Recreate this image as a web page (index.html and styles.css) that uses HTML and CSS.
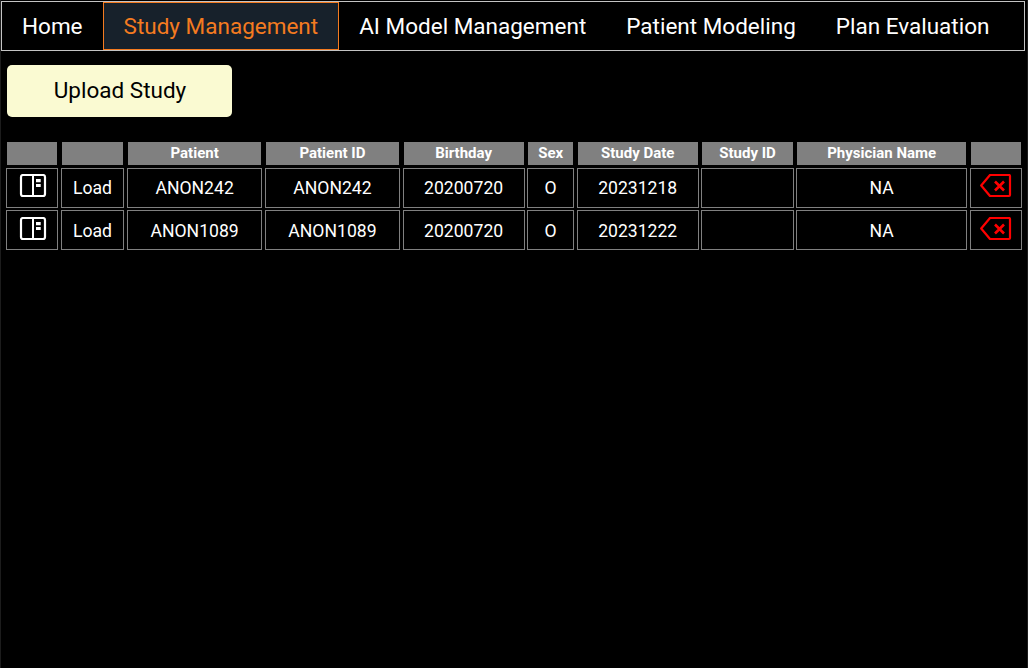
FILE: index.html
```html
<!DOCTYPE html>
<html lang="en">
<head>
<meta charset="utf-8">
<title>Study Management</title>
<link rel="stylesheet" href="styles.css">
</head>
<body>
<nav class="nav">
  <a class="tab">Home</a>
  <a class="tab active">Study Management</a>
  <a class="tab">AI Model Management</a>
  <a class="tab">Patient Modeling</a>
  <a class="tab">Plan Evaluation</a>
</nav>
<button class="upload">Upload Study</button>
<div class="studies">
  <div class="hd"></div><div class="hd"></div><div class="hd">Patient</div><div class="hd">Patient ID</div><div class="hd">Birthday</div><div class="hd">Sex</div><div class="hd">Study Date</div><div class="hd">Study ID</div><div class="hd">Physician Name</div><div class="hd"></div>

  <div class="cell"><svg class="ico" width="30" height="24" viewBox="0 0 30 24"><rect x="4" y="1" width="24" height="21" rx="2" fill="none" stroke="#fff" stroke-width="2.2"/><path d="M16 1v21" stroke="#fff" stroke-width="2"/><path d="M19 5h4.7v3.3h-4.7zM19 10h4.7v3h-4.7z" fill="#fff"/></svg></div>
  <div class="cell">Load</div><div class="cell">ANON242</div><div class="cell">ANON242</div><div class="cell">20200720</div><div class="cell">O</div><div class="cell">20231218</div><div class="cell"></div><div class="cell">NA</div>
  <div class="cell"><svg class="ico" width="36" height="24" viewBox="0 0 36 24"><path d="M12 1H31a1 1 0 0 1 1 1V21a1 1 0 0 1-1 1H12L3.2 11.5Z" fill="none" stroke="#f00" stroke-width="2.2" stroke-linejoin="round"/><path d="M17 7.5l9 9M26 7.5l-9 9" stroke="#f00" stroke-width="2.6"/></svg></div>

  <div class="cell"><svg class="ico" width="30" height="24" viewBox="0 0 30 24"><rect x="4" y="1" width="24" height="21" rx="2" fill="none" stroke="#fff" stroke-width="2.2"/><path d="M16 1v21" stroke="#fff" stroke-width="2"/><path d="M19 5h4.7v3.3h-4.7zM19 10h4.7v3h-4.7z" fill="#fff"/></svg></div>
  <div class="cell">Load</div><div class="cell">ANON1089</div><div class="cell">ANON1089</div><div class="cell">20200720</div><div class="cell">O</div><div class="cell">20231222</div><div class="cell"></div><div class="cell">NA</div>
  <div class="cell"><svg class="ico" width="36" height="24" viewBox="0 0 36 24"><path d="M12 1H31a1 1 0 0 1 1 1V21a1 1 0 0 1-1 1H12L3.2 11.5Z" fill="none" stroke="#f00" stroke-width="2.2" stroke-linejoin="round"/><path d="M17 7.5l9 9M26 7.5l-9 9" stroke="#f00" stroke-width="2.6"/></svg></div>
</div>
</body>
</html>
```
FILE: styles.css
```css
html, body { margin: 0; padding: 0; background: #000; }
body { height: 668px; overflow: hidden; font-family: Roboto, sans-serif; color: #fff; padding-top: 1px; box-sizing: border-box; border-left: 1px solid #1c1c1c; border-right: 1px solid #1c1c1c; }
.nav { display: flex; height: 50px; box-sizing: border-box; border: 1px solid #c4c4c4; width: 1024px; }
.tab { display: flex; align-items: center; padding: 0 20px; font-size: 22.5px; color: #fff; box-sizing: border-box; white-space: nowrap; }
.tab.active { color: #f47b20; background: #17212b; border: 1px solid #f47b20; }
.upload { display: block; margin: 14px 0 0 6px; width: 225px; height: 52px; background: #fafad2; color: #000; border: 0; border-radius: 5px; font: 400 22.5px Roboto, sans-serif; padding: 0 0 2px 1px; }
.studies { display: grid; margin: 24px 0 0 5px; column-gap: 2.7px; row-gap: 2.4px; grid-template-columns: 52px 63.7px 135.1px 135.2px 121.8px 46.9px 121.8px 92.5px 170.4px 52.3px; grid-template-rows: 24.6px 40px 40px; }
.hd { margin: 1px; padding-bottom: 1.6px; display: flex; align-items: center; justify-content: center; background: #808080; font-size: 15px; font-weight: 700; color: #fff; }
.cell { display: flex; align-items: center; justify-content: center; box-sizing: border-box; border: 1px solid #808080; padding-top: 0.6px; font-size: 17.6px; }
.ico { display: block; margin-bottom: 4.2px; }
```
